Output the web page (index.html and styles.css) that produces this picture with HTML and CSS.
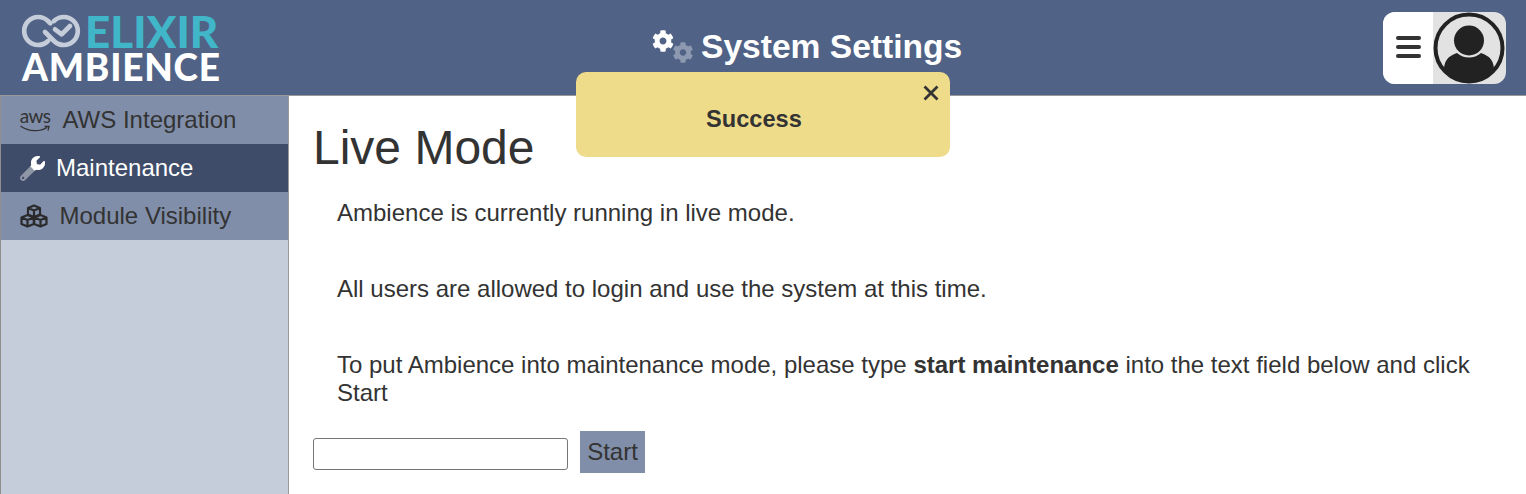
FILE: index.html
```html
<!DOCTYPE html>
<html lang="en">
<head>
<meta charset="utf-8">
<title>System Settings</title>
<link rel="stylesheet" href="styles.css">
</head>
<body>
<svg class="defs" width="0" height="0" aria-hidden="true">
  <defs>
    <path id="cog" d="M487.4 315.7l-42.6-24.6c4.3-23.2 4.3-47 0-70.2l42.6-24.6c4.9-2.8 7.1-8.6 5.5-14-11.1-35.6-30-67.8-54.7-94.6-3.8-4.1-10-5.1-14.8-2.3L380.8 110c-17.9-15.4-38.5-27.3-60.8-35.1V25.8c0-5.6-3.9-10.5-9.4-11.7-36.7-8.2-74.3-7.8-109.2 0-5.5 1.2-9.4 6.1-9.4 11.7V75c-22.2 7.9-42.8 19.8-60.8 35.1L88.7 85.5c-4.9-2.8-11-1.9-14.8 2.3-24.7 26.7-43.6 58.9-54.7 94.6-1.7 5.4.6 11.2 5.5 14L67.3 221c-4.3 23.2-4.3 47 0 70.2l-42.6 24.6c-4.9 2.8-7.1 8.6-5.5 14 11.1 35.6 30 67.8 54.7 94.6 3.8 4.1 10 5.1 14.8 2.3l42.6-24.6c17.9 15.4 38.5 27.3 60.8 35.1v49.2c0 5.6 3.9 10.5 9.4 11.7 36.7 8.2 74.3 7.8 109.2 0 5.5-1.2 9.4-6.1 9.4-11.7v-49.2c22.2-7.9 42.8-19.8 60.8-35.1l42.6 24.6c4.9 2.8 11 1.9 14.8-2.3 24.7-26.7 43.6-58.9 54.7-94.6 1.5-5.5-.7-11.3-5.6-14.1zM256 336c-44.1 0-80-35.9-80-80s35.9-80 80-80 80 35.9 80 80-35.9 80-80 80z"/>
    <path id="wrench" d="M507.73 109.1c-2.24-9.03-13.54-12.09-20.12-5.51l-74.36 74.36-67.88-11.31-11.31-67.88 74.36-74.36c6.62-6.62 3.43-17.9-5.66-20.16-47.38-11.74-99.55.91-136.58 37.93-39.64 39.64-50.55 97.1-34.05 147.2L18.74 402.76c-24.99 24.99-24.99 65.51 0 90.5 24.99 24.99 65.51 24.99 90.5 0l213.21-213.21c50.12 16.71 107.47 5.68 147.37-34.22 37.07-37.07 49.7-89.32 37.91-136.73zM64 472c-13.25 0-24-10.75-24-24 0-13.26 10.75-24 24-24s24 10.74 24 24c0 13.25-10.75 24-24 24z"/>
    <clipPath id="wrench-head"><polygon points="512,0 512,512 300,300 190,190 190,0"/></clipPath>
  </defs>
</svg>
<header class="topbar">
  <div class="logo">
    <div class="logo-top">
      <svg class="logo-mark" viewBox="0 0 180 102" aria-hidden="true">
        <path d="M81 81 A42 42 0 1 1 81 21 L88 28 M99 21 A42 42 0 1 1 99 81 L72 54 M102 46 L122 61 L147 36" fill="none" stroke="#c5ccda" stroke-width="14" stroke-linecap="round" stroke-linejoin="round"/>
      </svg>
      <span class="logo-elixir">ELIXIR</span>
    </div>
    <div class="logo-ambience">AMBIENCE</div>
  </div>
  <div class="title">
    <svg class="title-icon" viewBox="0 0 44 36" aria-hidden="true">
      <use href="#cog" class="cog-white" transform="scale(.043)"/>
      <use href="#cog" class="cog-grey" transform="translate(20.500 12) scale(.041)"/>
    </svg>
    <h2 class="title-text">System Settings</h2>
  </div>
  <div class="usermenu">
    <div class="menu-btn">
      <span class="menu-lines"><i></i><i></i><i></i></span>
    </div>
    <svg class="avatar" viewBox="0 0 73 72" aria-hidden="true">
      <circle cx="36" cy="36" r="33.500" fill="none" stroke="#222" stroke-width="4"/>
      <circle cx="36" cy="28.500" r="15" fill="#222"/>
      <path d="M11 58 C11 49 15 44 24 41 C31 47 41 47 48 41 C57 44 61 49 61 58 C55 66 46 70 36 70 C26 70 17 66 11 58Z" fill="#222"/>
    </svg>
  </div>
</header>
<div class="toast">
  <span class="toast-text">Success</span>
  <svg class="toast-close" viewBox="0 0 16 16" aria-hidden="true"><path d="M1.500 1.500 L14.500 14.500 M14.500 1.500 L1.500 14.500"/></svg>
</div>
<div class="layout">
  <nav class="sidebar">
    <a class="nav-item">
      <span class="aws"><span class="aws-word">aws</span>
        <svg class="aws-smile" viewBox="0 0 30 8" aria-hidden="true"><path d="M.5 1 C9 7 20 7 27 2.500 M24.500 1.500 L29 1.500 L28 5.500" fill="none" stroke="#333" stroke-width="1.300"/></svg>
      </span>
      <span class="nav-label nav-label-aws">AWS Integration</span>
    </a>
    <a class="nav-item active">
      <svg class="nav-wrench" viewBox="0 0 512 512" aria-hidden="true">
        <use href="#wrench" fill="#8f96a6"/>
        <g clip-path="url(#wrench-head)"><use href="#wrench" fill="#fff"/></g>
      </svg>
      <span class="nav-label">Maintenance</span>
    </a>
    <a class="nav-item">
      <svg class="nav-cubes" viewBox="0 0 28 24" aria-hidden="true">
        <path d="M14 1.500 L20 4 V10.500 L14 13 L8 10.500 V4 Z M8 4 L14 6.500 L20 4 M14 6.500 V13 M7.500 11 L13.800 13.500 V20 L7.500 22.500 L1.500 20 V13.500 Z M1.500 13.500 L7.500 16 L13.800 13.500 M7.500 16 V22.500 M20.500 11 L26.500 13.500 V20 L20.500 22.500 L14.200 20 V13.500 Z M14.200 13.500 L20.500 16 L26.500 13.500 M20.500 16 V22.500" fill="none" stroke="#2a2a2a" stroke-width="2.200" stroke-linejoin="round"/>
      </svg>
      <span class="nav-label nav-label-cubes">Module Visibility</span>
    </a>
  </nav>
  <main class="content">
    <h1 class="heading">Live Mode</h1>
    <p class="para">Ambience is currently running in live mode.</p>
    <p class="para">All users are allowed to login and use the system at this time.</p>
    <p class="para">To put Ambience into maintenance mode, please type <strong>start maintenance</strong> into the text field below and click Start</p>
    <div class="form-row">
      <input class="text-field" type="text">
      <button class="start-btn" type="button">Start</button>
    </div>
  </main>
</div>
</body>
</html>
```
FILE: styles.css
```css
* { box-sizing: border-box; }
html, body { margin: 0; height: 100%; }
body {
  font-family: "Liberation Sans", Arial, sans-serif;
  color: #333;
  background: #fff;
  overflow: hidden;
  position: relative;
}
.defs { position: absolute; }

.topbar {
  height: 96px;
  background: #506285;
  border-bottom: 1px solid #9a9a9a;
  padding: 0 20px 0 21px;
  display: flex;
  align-items: center;
  justify-content: space-between;
}
.logo { width: 200px; display: flex; flex-direction: column; margin-top: -2px; }
.logo-top { display: flex; align-items: center; height: 40px; }
.logo-mark { width: 60px; height: 34px; flex: none; }
.logo-elixir {
  font-family: Lato, sans-serif;
  font-weight: 900;
  font-size: 44px;
  line-height: 40px;
  color: #41b6c9;
  margin-left: 4px;
}
.logo-ambience {
  font-family: Lato, sans-serif;
  font-weight: 900;
  font-size: 37px;
  line-height: 31px;
  letter-spacing: 0.800px;
  margin-left: 1px;
  color: #fff;
}

.title {
  position: absolute;
  left: 652px;
  top: 26px;
  display: flex;
  align-items: flex-start;
}
.title-icon { width: 44px; height: 36px; flex: none; margin-top: 4px; }
.cog-white { fill: #fff; }
.cog-grey { fill: #8d99b0; }
.title-text {
  margin: 0 0 0 5px;
  font-size: 33.600px;
  font-weight: 700;
  line-height: 42px;
  color: #fff;
}

.usermenu {
  width: 123px;
  height: 72px;
  display: flex;
  border-radius: 12px;
  overflow: hidden;
  background: #e2e2e2;
  margin-top: 1px;
}
.menu-btn {
  width: 50px;
  background: #fff;
  display: flex;
  align-items: center;
  justify-content: center;
}
.menu-lines { width: 25px; display: flex; flex-direction: column; gap: 5px; margin-bottom: 3px; }
.menu-lines i { display: block; height: 4px; border-radius: 2px; background: #333; }
.avatar { width: 73px; height: 72px; }

.toast {
  position: absolute;
  left: 575.500px;
  top: 72px;
  width: 374.500px;
  height: 85px;
  background: #eedc8a;
  border-radius: 10px;
  z-index: 2;
}
.toast-text {
  position: absolute;
  left: 130.500px;
  top: 34px;
  font-size: 23.600px;
  font-weight: 700;
  line-height: 26px;
}
.toast-close {
  position: absolute;
  left: 347.500px;
  top: 12.500px;
  width: 16px;
  height: 16px;
  fill: none;
  stroke: #333;
  stroke-width: 2.800;
}

.layout { display: flex; height: 398px; }
.sidebar {
  width: 289px;
  flex: none;
  background: #c5ccda;
  border-left: 1px solid #8f8f8f;
  border-right: 1px solid #999;
}
.nav-item {
  height: 48px;
  background: #808ea9;
  display: flex;
  align-items: center;
  padding-left: 19px;
  font-size: 24px;
  color: #333;
}
.nav-item.active { background: #3e4c69; color: #fff; }
.nav-label { margin-left: 11px; }
.nav-label-aws { margin-left: 12.500px; }
.nav-label-cubes { margin-left: 11.500px; }
.aws { width: 30px; height: 27px; display: flex; flex-direction: column; align-items: center; }
.aws-word { font-family: Lato, sans-serif; font-size: 19px; line-height: 18px; letter-spacing: -0.600px; }
.aws-smile { width: 30px; height: 8px; flex: none; }
.nav-wrench { width: 25px; height: 25px; flex: none; }
.nav-cubes { width: 28px; height: 24px; flex: none; }

.content { flex: 1; padding: 0 24px; min-width: 0; }
.heading {
  margin: 24px 0 24px;
  font-size: 48px;
  font-weight: 400;
  line-height: 55px;
}
.para {
  margin: 0 0 48px 24px;
  font-size: 24px;
  line-height: 28px;
}
.para:last-of-type { margin-bottom: 24px; }
.form-row { display: flex; align-items: center; }
.text-field {
  width: 255px;
  height: 32px;
  border: 1px solid #767676;
  border-radius: 3px;
  background: #fff;
  padding: 0 2px;
  margin-top: 4px;
}
.start-btn {
  margin-left: 12px;
  width: 65px;
  height: 42px;
  background: #808ea9;
  border: none;
  padding: 0;
  font-family: inherit;
  font-size: 24px;
  color: #333;
}
```
